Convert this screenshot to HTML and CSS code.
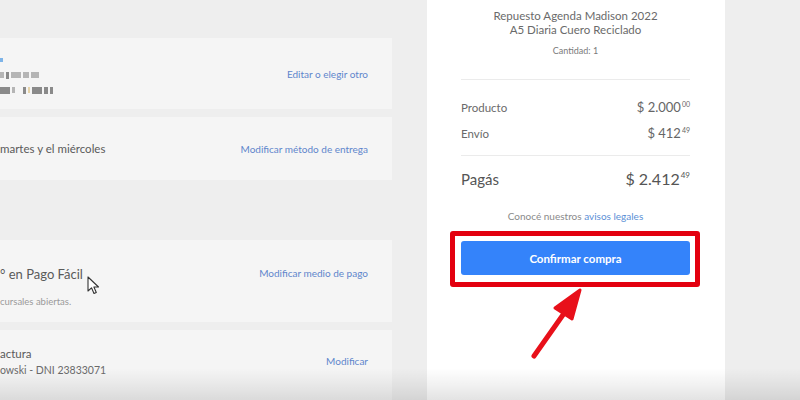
FILE: index.html
```html
<!DOCTYPE html>
<html lang="es">
<head>
<meta charset="utf-8">
<link rel="stylesheet" href="styles.css">
</head>
<body>
<div class="page">
  <div class="left">
    <div class="card card-address">
      <div class="card-main">
        <span class="dot"></span>
        <div class="pix-row">
          <i class="px w4"></i><i class="px w3 d"></i><i class="px w10"></i><i class="px w6"></i><i class="px w8"></i>
        </div>
        <div class="pix-row">
          <i class="px w10 d"></i><i class="px w3"></i><i class="px w3 d gap"></i><i class="px w2 y"></i><i class="px w10 d"></i><i class="px w4 d"></i><i class="px w3 d"></i>
        </div>
      </div>
      <a class="link">Editar o elegir otro</a>
    </div>
    <div class="card card-delivery">
      <div class="card-main"><p class="main-text">martes y el miércoles</p></div>
      <a class="link">Modificar método de entrega</a>
    </div>
    <div class="card card-payment">
      <div class="card-main">
        <p class="main-text pay">° en Pago Fácil</p>
        <p class="sub-text">cursales abiertas.</p>
      </div>
      <a class="link">Modificar medio de pago</a>
    </div>
    <div class="card card-invoice">
      <div class="card-main">
        <p class="main-text">actura</p>
        <p class="sub-text dark">owski - DNI 23833071</p>
      </div>
      <a class="link">Modificar</a>
    </div>
  </div>
  <div class="summary">
    <p class="title">Repuesto Agenda Madison 2022<br>A5 Diaria Cuero Reciclado</p>
    <p class="qty">Cantidad: 1</p>
    <hr class="rule rule-top">
    <div class="row"><span>Producto</span><span class="price">$ 2.000<sup>00</sup></span></div>
    <div class="row"><span>Envío</span><span class="price">$ 412<sup>49</sup></span></div>
    <hr class="rule rule-mid">
    <div class="row total"><span>Pagás</span><span class="price">$ 2.412<sup>49</sup></span></div>
    <p class="legal">Conocé nuestros <a>avisos legales</a></p>
    <div class="highlight">
      <button class="confirm">Confirmar compra</button>
    </div>
  </div>
</div>
<svg class="arrow" width="80" height="90" viewBox="0 0 80 90">
  <line x1="13" y1="74" x2="44" y2="30" stroke="#e8101a" stroke-width="5" stroke-linecap="round"/>
  <polygon points="59,8 34,26 51,37" fill="#e8101a" stroke="#e8101a" stroke-width="3" stroke-linejoin="round"/>
</svg>
<svg class="cursor" width="14" height="20" viewBox="0 0 14 20">
  <path d="M1 1 L1 15 L4.5 11.8 L7 17.5 L9.3 16.5 L6.9 11 L11.5 11 Z" fill="#fff" stroke="#333" stroke-width="1.1" stroke-linejoin="round"/>
</svg>
<div class="shade"></div>
</body>
</html>
```
FILE: styles.css
```css
* { box-sizing: border-box; }
html, body { margin: 0; padding: 0; }
body {
  width: 800px;
  height: 400px;
  overflow: hidden;
  background: #eeeeee;
  font-family: "Lato", "Open Sans", sans-serif;
  color: #555;
  position: relative;
}
p { margin: 0; }
.page {
  display: flex;
  gap: 35px;
  height: 400px;
}
.left {
  width: 392px;
  padding-top: 38px;
  display: flex;
  flex-direction: column;
  gap: 8px;
}
.card {
  flex-shrink: 0;
  background: #f5f5f5;
  display: flex;
  align-items: center;
  justify-content: space-between;
  padding-right: 24px;
}
.card-address { height: 71px; align-items: flex-start; padding-top: 20px; }
.card-address .link { margin-top: 10px; }
.card-delivery { height: 63px; }
.card-payment { height: 82px; margin-top: 52px; align-items: flex-start; padding-top: 26px; }
.card-invoice { height: 80px; align-items: flex-start; padding-top: 15px; }
.card-invoice .link { margin-top: 10px; }
.card-payment .link { margin-top: 1px; }
.card-main { display: flex; flex-direction: column; }
.dot {
  width: 3px; height: 4px; background: #7eb4e8; margin-bottom: 9px;
}
.pix-row { display: flex; align-items: center; gap: 2px; height: 8px; margin-bottom: 7px; }
.px { display: inline-block; height: 6px; background: #b5b5b5; }
.px.d { background: #8a8a8a; height: 7px; }
.px.y { background: #e6d3a8; }
.px.gap { margin-left: 6px; }
.w2 { width: 2px; } .w3 { width: 3px; } .w4 { width: 4px; } .w6 { width: 6px; } .w8 { width: 8px; } .w10 { width: 10px; }
.main-text { font-size: 11.5px; color: #5a5a5a; }
.main-text.pay { font-size: 13px; }
.sub-text { font-size: 9.5px; color: #9a9a9a; margin-top: 14px; }
.sub-text.dark { color: #6a6a6a; font-size: 10.5px; margin-top: 4px; }
.card-invoice .main-text { margin-top: 2px; }
.link { font-size: 10px; color: #5f86cc; }
.summary {
  flex-shrink: 0;
  width: 298px;
  background: #fff;
  padding: 9px 35px 0 34px;
  display: flex;
  flex-direction: column;
}
.title { text-align: center; font-size: 11.5px; line-height: 14px; color: #6a6a6a; }
.qty { text-align: center; font-size: 9px; color: #7a7a7a; margin-top: 8px; }
.rule { border: 0; border-top: 1px solid #ebebeb; margin: 0; }
.rule-top { margin-top: 23px; margin-bottom: 11px; }
.rule-mid { margin-top: 12px; margin-bottom: 5px; }
.row { display: flex; justify-content: space-between; align-items: baseline; font-size: 11.5px; color: #6a6a6a; height: 26px; line-height: 26px; }
.price { font-size: 13px; color: #666; }
.price sup { font-size: 7px; vertical-align: 5px; margin-left: 1px; }
.row.total { font-size: 15px; color: #555; height: 28px; line-height: 28px; }
.row.total .price { font-size: 16px; color: #555; }
.row.total .price sup { font-size: 8px; vertical-align: 7px; }
.legal { text-align: center; font-size: 10px; color: #8a8a8a; margin-top: 21px; }
.legal a { color: #5b8fd6; }
.highlight {
  margin: 9px -10px 0 -11px;
  border: 5px solid #e3000f;
  border-radius: 3px;
  padding: 5px 5px 7px 6px;
}
.confirm {
  display: block;
  width: 100%;
  height: 34px;
  background: #3483fa;
  border: 0;
  border-radius: 3px;
  color: #fff;
  font-family: "Lato", "Open Sans", sans-serif;
  font-weight: 700;
  font-size: 11.5px;
}
.arrow { position: absolute; left: 521px; top: 282px; }
.cursor { position: absolute; left: 87px; top: 276px; }
.shade {
  position: absolute;
  left: 0; right: 0; bottom: 0;
  height: 32px;
  background: linear-gradient(to bottom, rgba(0,0,0,0) 0%, rgba(0,0,0,0.05) 50%, rgba(0,0,0,0.11) 100%);
}
```
